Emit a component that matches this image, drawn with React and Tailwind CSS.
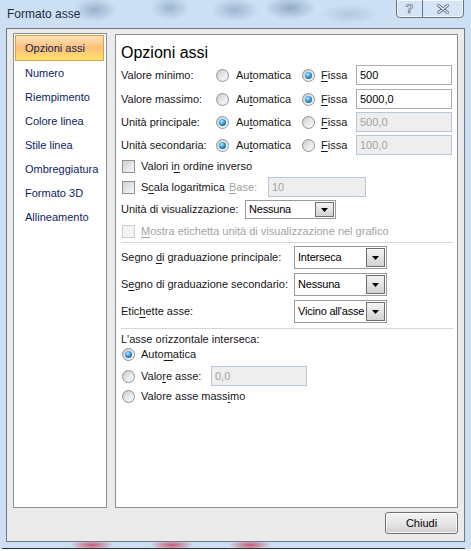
import React from 'react'

function U({ children }) {
  return <span className="underline underline-offset-[2px]">{children}</span>
}

function Radio({ checked }) {
  return (
    <span className="w-[13px] h-[13px] shrink-0 rounded-full border border-[#8e9092] bg-linear-to-br from-[#c9c9c9] via-[#e8e8e8] to-[#fbfbfb] flex items-center justify-center">
      {checked && (
        <span className="w-[7px] h-[7px] rounded-full bg-[radial-gradient(circle_at_40%_35%,#c2f0ff_0%,#2f96dc_45%,#0c3c6e_100%)]" />
      )}
    </span>
  )
}

function Check({ disabled }) {
  return disabled ? (
    <span className="w-[13px] h-[13px] shrink-0 border border-[#cdcdcd] bg-[#f3f3f3]" />
  ) : (
    <span className="w-[13px] h-[13px] shrink-0 border border-[#8e9092] bg-linear-to-br from-[#cdd2d6] to-[#f7f7f7]" />
  )
}

function Field({ value, disabled, w }) {
  return (
    <div
      className={`${w} h-[20px] flex items-center px-[3px] border ${
        disabled ? 'border-[#b7c7d9] bg-[#eeeeee] text-[#a3a3a3]' : 'border-[#a8adb3] bg-white text-black'
      }`}
    >
      {value}
    </div>
  )
}

function Select({ value, w, h }) {
  return (
    <div className={`${w} ${h} flex border border-[#9a9a9a] bg-white`}>
      <span className="flex-1 min-w-0 flex items-center pl-[3px] text-black whitespace-nowrap overflow-hidden tracking-[-0.2px]">
        {value}
      </span>
      <span className="w-[19px] shrink-0 m-px border border-[#6f6f6f] bg-linear-to-b from-[#f4f4f4] to-[#d2d2d2] flex items-center justify-center">
        <svg width="7" height="4" viewBox="0 0 7 4">
          <polygon points="0,0 7,0 3.5,4" fill="#000" />
        </svg>
      </span>
    </div>
  )
}

function OptionRow({ label, auto, value, mt }) {
  return (
    <div className={`${mt} h-[20px] flex items-center`}>
      <span className="w-[95px]">{label}</span>
      <span className="w-[86px] flex items-center gap-[7px]">
        <Radio checked={auto} />
        <span>
          Au<U>t</U>omatica
        </span>
      </span>
      <span className="w-[54px] flex items-center gap-[6px]">
        <Radio checked={!auto} />
        <span>
          <U>F</U>issa
        </span>
      </span>
      <Field value={value} disabled={auto} w="w-[96px]" />
    </div>
  )
}

const items = ['Numero', 'Riempimento', 'Colore linea', 'Stile linea', 'Ombreggiatura', 'Formato 3D', 'Allineamento']

export default function App() {
  return (
    <div className="w-[471px] h-[551px] overflow-hidden flex flex-col bg-[#cde0f3] font-['Liberation_Sans',Arial,sans-serif] text-[11px] leading-none text-[#161616]">
      {/* title bar */}
      <div className="h-[28px] shrink-0 flex items-start justify-between bg-[radial-gradient(ellipse_22px_12px_at_95px_10px,rgba(110,140,180,0.55),transparent),radial-gradient(ellipse_20px_12px_at_170px_8px,rgba(110,140,180,0.5),transparent),radial-gradient(ellipse_24px_12px_at_235px_10px,rgba(110,140,180,0.5),transparent),radial-gradient(ellipse_26px_12px_at_290px_8px,rgba(100,130,170,0.55),transparent),radial-gradient(ellipse_30px_10px_at_350px_14px,rgba(150,170,200,0.45),transparent)]">
        <span className="ml-[7px] mt-[8px] text-[12px] text-[#1b2b40]">Formato asse</span>
        <div className="mr-[7px] -mt-px h-[19px] flex border border-[#66748a] rounded-b-[4px] bg-[#d6e5f5] shadow-[inset_0_0_0_1px_rgba(255,255,255,0.7)]">
          <span className="w-[26px] flex items-center justify-center border-r border-[#66748a] text-[13px] font-bold text-[#e8eef5] [-webkit-text-stroke:0.6px_#5a6478]">
            ?
          </span>
          <span className="w-[40px] flex items-center justify-center">
            <svg width="12" height="10" viewBox="0 0 12 10">
              <path d="M1 1 L11 9 M11 1 L1 9" stroke="#5b6679" strokeWidth="3" strokeLinecap="round" />
              <path d="M1 1 L11 9 M11 1 L1 9" stroke="#eef2f7" strokeWidth="1.4" strokeLinecap="round" />
            </svg>
          </span>
        </div>
      </div>

      {/* client area */}
      <div className="ml-[6px] w-[459px] h-[514px] shrink-0 border border-[#6d7989] bg-[#ebebeb] flex flex-col px-[6px] pt-[4px]">
        <div className="flex gap-[8px] items-start">
          {/* left list */}
          <div className="w-[94px] h-[475px] border border-[#8b9097] bg-white pt-px">
            <div className="ml-px w-[89px] h-[26px] flex items-center pl-[9px] border border-[#dca24a] bg-linear-to-b from-[#fee3b8] via-[#fcbf76] to-[#ffe36c] text-[#0c2461]">
              Opzioni assi
            </div>
            {items.map((t) => (
              <div key={t} className="h-[24px] flex items-center pl-[11px] text-[#0c2461]">
                {t}
              </div>
            ))}
          </div>

          {/* right panel */}
          <div className="mt-px w-[343px] h-[474px] border border-[#8b9097] bg-white pl-[5px] pr-[4px] flex flex-col">
            <div className="mt-[8px] h-[20px] flex items-center text-[16px] text-black">Opzioni assi</div>

            <OptionRow label="Valore minimo:" auto={false} value="500" mt="mt-[2px]" />
            <OptionRow label="Valore massimo:" auto={false} value="5000,0" mt="mt-[4px]" />
            <OptionRow label="Unità principale:" auto value="500,0" mt="mt-[3px]" />
            <OptionRow label="Unità secondaria:" auto value="100,0" mt="mt-[3px]" />

            <div className="mt-[3px] h-[16px] flex items-center gap-[6px] pl-px">
              <Check />
              <span>
                Valori i<U>n</U> ordine inverso
              </span>
            </div>

            <div className="mt-[3px] h-[20px] flex items-center">
              <span className="w-[108px] flex items-center gap-[6px] pl-px">
                <Check />
                <span>
                  S<U>c</U>ala logaritmica
                </span>
              </span>
              <span className="w-[39px] text-[#a3a3a3]">
                <U>B</U>ase:
              </span>
              <Field value="10" disabled w="w-[98px]" />
            </div>

            <div className="mt-[3px] h-[19px] flex items-center">
              <span className="w-[124px]">Unità di visualizzazione:</span>
              <Select value="Nessuna" w="w-[91px]" h="h-[19px]" />
            </div>

            <div className="mt-[4px] h-[16px] flex items-center gap-[6px] pl-px text-[#a3a3a3]">
              <Check disabled />
              <span>
                <U>M</U>ostra etichetta unità di visualizzazione nel grafico
              </span>
            </div>

            <div className="mt-[3px] h-px bg-[#d6d6d6]" />

            <div className="mt-[3px] h-[23px] flex items-center">
              <span className="w-[173px]">
                Segno <U>d</U>i graduazione principale:
              </span>
              <Select value="Interseca" w="w-[93px]" h="h-[23px]" />
            </div>
            <div className="mt-[4px] h-[23px] flex items-center">
              <span className="w-[173px]">
                S<U>e</U>gno di graduazione secondario:
              </span>
              <Select value="Nessuna" w="w-[93px]" h="h-[23px]" />
            </div>
            <div className="mt-[4px] h-[23px] flex items-center">
              <span className="w-[173px]">
                Etic<U>h</U>ette asse:
              </span>
              <Select value="Vicino all'asse" w="w-[93px]" h="h-[23px]" />
            </div>

            <div className="mt-[5px] h-px bg-[#d6d6d6]" />

            <div className="mt-[3px] h-[14px] flex items-center">L'asse orizzontale interseca:</div>
            <div className="mt-[1px] h-[14px] flex items-center gap-[6px] pl-px">
              <Radio checked />
              <span>
                Auto<U>m</U>atica
              </span>
            </div>
            <div className="mt-[5px] h-[20px] flex items-center pl-px">
              <span className="w-[89px] flex items-center gap-[6px]">
                <Radio />
                <span>
                  Valo<U>r</U>e asse:
                </span>
              </span>
              <Field value="0,0" disabled w="w-[96px]" />
            </div>
            <div className="mt-[3px] h-[14px] flex items-center gap-[6px] pl-px">
              <Radio />
              <span>
                Valore asse mass<U>i</U>mo
              </span>
            </div>
          </div>
        </div>

        <div className="mt-[4px] flex justify-end">
          <button className="w-[73px] h-[22px] rounded-[3px] border border-[#707070] bg-linear-to-b from-[#f3f3f3] via-[#e6e6e6] to-[#cfcfcf] shadow-[inset_0_0_0_1px_rgba(255,255,255,0.8)] text-[11px] text-black">
            Chiudi
          </button>
        </div>
      </div>

      {/* bottom frame */}
      <div className="h-[6px] shrink-0 bg-[radial-gradient(ellipse_22px_5px_at_92px_3px,rgba(200,60,85,0.85),transparent),radial-gradient(ellipse_22px_5px_at_172px_3px,rgba(200,60,85,0.85),transparent),radial-gradient(ellipse_22px_5px_at_250px_3px,rgba(200,60,85,0.85),transparent)]" />
      <div className="ml-[2px] w-[463px] h-px bg-[#2b2f36]" />
      <div className="flex-1 bg-white" />
    </div>
  )
}
